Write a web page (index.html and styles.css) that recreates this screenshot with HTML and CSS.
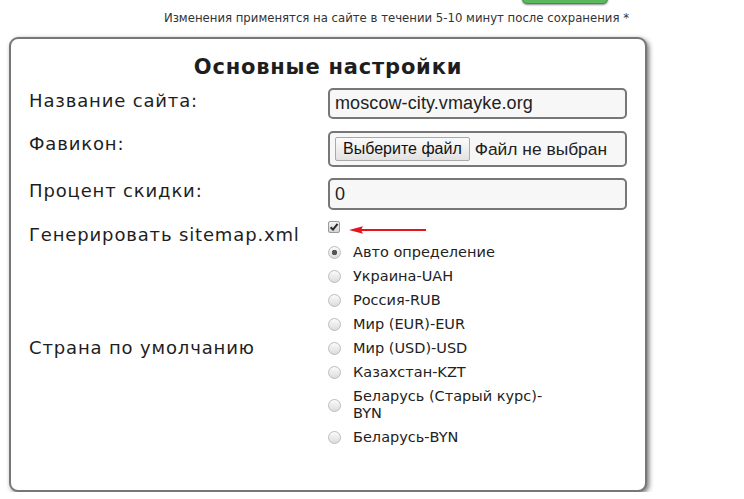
FILE: index.html
```html
<!DOCTYPE html>
<html lang="ru">
<head>
<meta charset="utf-8">
<title>Основные настройки</title>
<link rel="stylesheet" href="styles.css">
</head>
<body>
<div class="page">
  <div class="topbar"><button class="save-btn" type="button" aria-label="Сохранить"></button></div>
  <p class="note">Изменения применятся на сайте в течении 5-10 минут после сохранения *</p>
  <section class="card">
    <h2 class="card-title">Основные настройки</h2>

    <div class="row row-first">
      <label class="row-label">Название сайта:</label>
      <input class="text-input" type="text" value="moscow-city.vmayke.org">
    </div>

    <div class="row">
      <label class="row-label">Фавикон:</label>
      <div class="file-box">
        <span class="file-btn">Выберите файл</span>
        <span class="file-name">Файл не выбран</span>
      </div>
    </div>

    <div class="row row-tight">
      <label class="row-label">Процент скидки:</label>
      <input class="text-input text-input-tall" type="text" value="0">
    </div>

    <div class="row row-tight row-check">
      <label class="row-label row-label-check">Генерировать sitemap.xml</label>
      <div class="check-wrap">
        <span class="checkbox">
          <svg width="10" height="10" viewBox="0 0 10 10"><path d="M1.6 5.2 L4 7.6 L8.6 1.8" fill="none" stroke="#2b2b2b" stroke-width="2"/></svg>
        </span>
        <svg class="arrow" width="78" height="10" viewBox="0 0 78 10"><path d="M12 5 H77" stroke="#e5141c" stroke-width="2.2"/><path d="M0 5 L14 1.2 L12 5 L14 8.8 Z" fill="#e5141c"/></svg>
      </div>
    </div>

    <div class="row row-radios">
      <label class="row-label row-label-mid">Страна по умолчанию</label>
      <ul class="radio-list">
        <li class="radio-item"><span class="radio radio-checked"></span><span class="radio-text">Авто определение</span></li>
        <li class="radio-item"><span class="radio"></span><span class="radio-text">Украина-UAH</span></li>
        <li class="radio-item"><span class="radio"></span><span class="radio-text">Россия-RUB</span></li>
        <li class="radio-item"><span class="radio"></span><span class="radio-text">Мир (EUR)-EUR</span></li>
        <li class="radio-item"><span class="radio"></span><span class="radio-text">Мир (USD)-USD</span></li>
        <li class="radio-item"><span class="radio"></span><span class="radio-text">Казахстан-KZT</span></li>
        <li class="radio-item"><span class="radio"></span><span class="radio-text">Беларусь (Старый курс)-BYN</span></li>
        <li class="radio-item"><span class="radio"></span><span class="radio-text">Беларусь-BYN</span></li>
      </ul>
    </div>
  </section>
</div>
</body>
</html>
```

FILE: styles.css
```css
* { box-sizing: border-box; }

body {
  margin: 0;
  background: #fff;
  color: #222;
  font-family: "DejaVu Sans", Verdana, sans-serif;
}

.page {
  width: 638px;
  margin-left: 9px;
}

.topbar {
  display: flex;
  justify-content: flex-end;
  height: 4px;
  padding-right: 39px;
}

.save-btn {
  width: 86px;
  height: 30px;
  margin-top: -26px;
  padding: 0;
  background: #5cb85c;
  border: 1px solid #3f923f;
  border-radius: 5px;
  box-shadow: 0 1px 2px rgba(0, 0, 0, 0.45);
}

.note {
  margin: 6px 0 0;
  padding-right: 18px;
  text-align: right;
  font-family: "DejaVu Sans Condensed", "DejaVu Sans", sans-serif;
  font-stretch: condensed;
  font-size: 13px;
  line-height: 16px;
  color: #333;
}

.card {
  margin-top: 11px;
  border: 2px solid #777;
  border-radius: 9px;
  box-shadow: 2px 2px 5px rgba(0, 0, 0, 0.55);
  padding: 14px 18px 44px;
  background: #fff;
}

.card-title {
  margin: 0;
  text-align: center;
  font-size: 21px;
  line-height: 28px;
  letter-spacing: 0.8px;
  font-weight: bold;
  color: #1e1e1e;
}

.row {
  display: flex;
  margin-top: 12px;
}

.row-first { margin-top: 7px; }
.row-tight { margin-top: 11px; }

.row-label {
  width: 299px;
  flex: none;
  padding-top: 2px;
  font-size: 18px;
  line-height: 22px;
  letter-spacing: 0.85px;
  color: #1e1e1e;
}

.text-input {
  display: block;
  width: 299px;
  height: 31px;
  margin: 0;
  padding: 0 5px;
  border: 2px solid #777;
  border-radius: 5px;
  background: #f7f7f7;
  font-family: "Liberation Sans", Arial, sans-serif;
  font-size: 18px;
  letter-spacing: 0.1px;
  color: #222;
  outline: none;
}

.text-input-tall { height: 32px; }

.file-box {
  display: flex;
  align-items: center;
  width: 299px;
  height: 36px;
  padding: 0 5px;
  border: 2px solid #777;
  border-radius: 5px;
  background: #f7f7f7;
  font-family: "Liberation Sans", Arial, sans-serif;
}

.file-btn {
  display: flex;
  align-items: center;
  height: 24px;
  padding: 0 7px;
  border: 1px solid #a9a9a9;
  border-radius: 2px;
  background: linear-gradient(#fbfbfb, #e2e2e2);
  font-size: 16px;
  color: #111;
}

.file-name {
  margin-left: 5px;
  font-size: 17.4px;
  color: #222;
}

.row-check {
  height: 12px;
  align-items: flex-start;
}

.row-label-check { padding-top: 3px; }

.check-wrap {
  display: flex;
  align-items: flex-start;
}

.checkbox {
  display: flex;
  align-items: center;
  justify-content: center;
  width: 12px;
  height: 12px;
  border: 1px solid #9a9a9a;
  border-radius: 2px;
  background: linear-gradient(#f4f4f4, #d4d4d4);
}

.arrow {
  display: block;
  margin-left: 9px;
  margin-top: 4px;
}

.row-radios {
  margin-top: 11px;
  align-items: center;
}

.row-label-mid {
  padding-top: 0;
  margin-top: 6px;
}

.radio-list {
  list-style: none;
  margin: 0;
  padding: 0;
  width: 230px;
  display: flex;
  flex-direction: column;
  gap: 7px;
}

.radio-item {
  display: flex;
  align-items: center;
  gap: 12px;
  font-size: 14.5px;
  line-height: 17px;
  color: #222;
}

.radio {
  flex: none;
  width: 13px;
  height: 13px;
  border-radius: 50%;
  border: 1px solid #bdbdbd;
  background: linear-gradient(#fbfbfb, #dcdcdc);
}

.radio-checked {
  background: radial-gradient(circle, #555 0 2.4px, transparent 3px), linear-gradient(#fbfbfb, #dcdcdc);
}
```
